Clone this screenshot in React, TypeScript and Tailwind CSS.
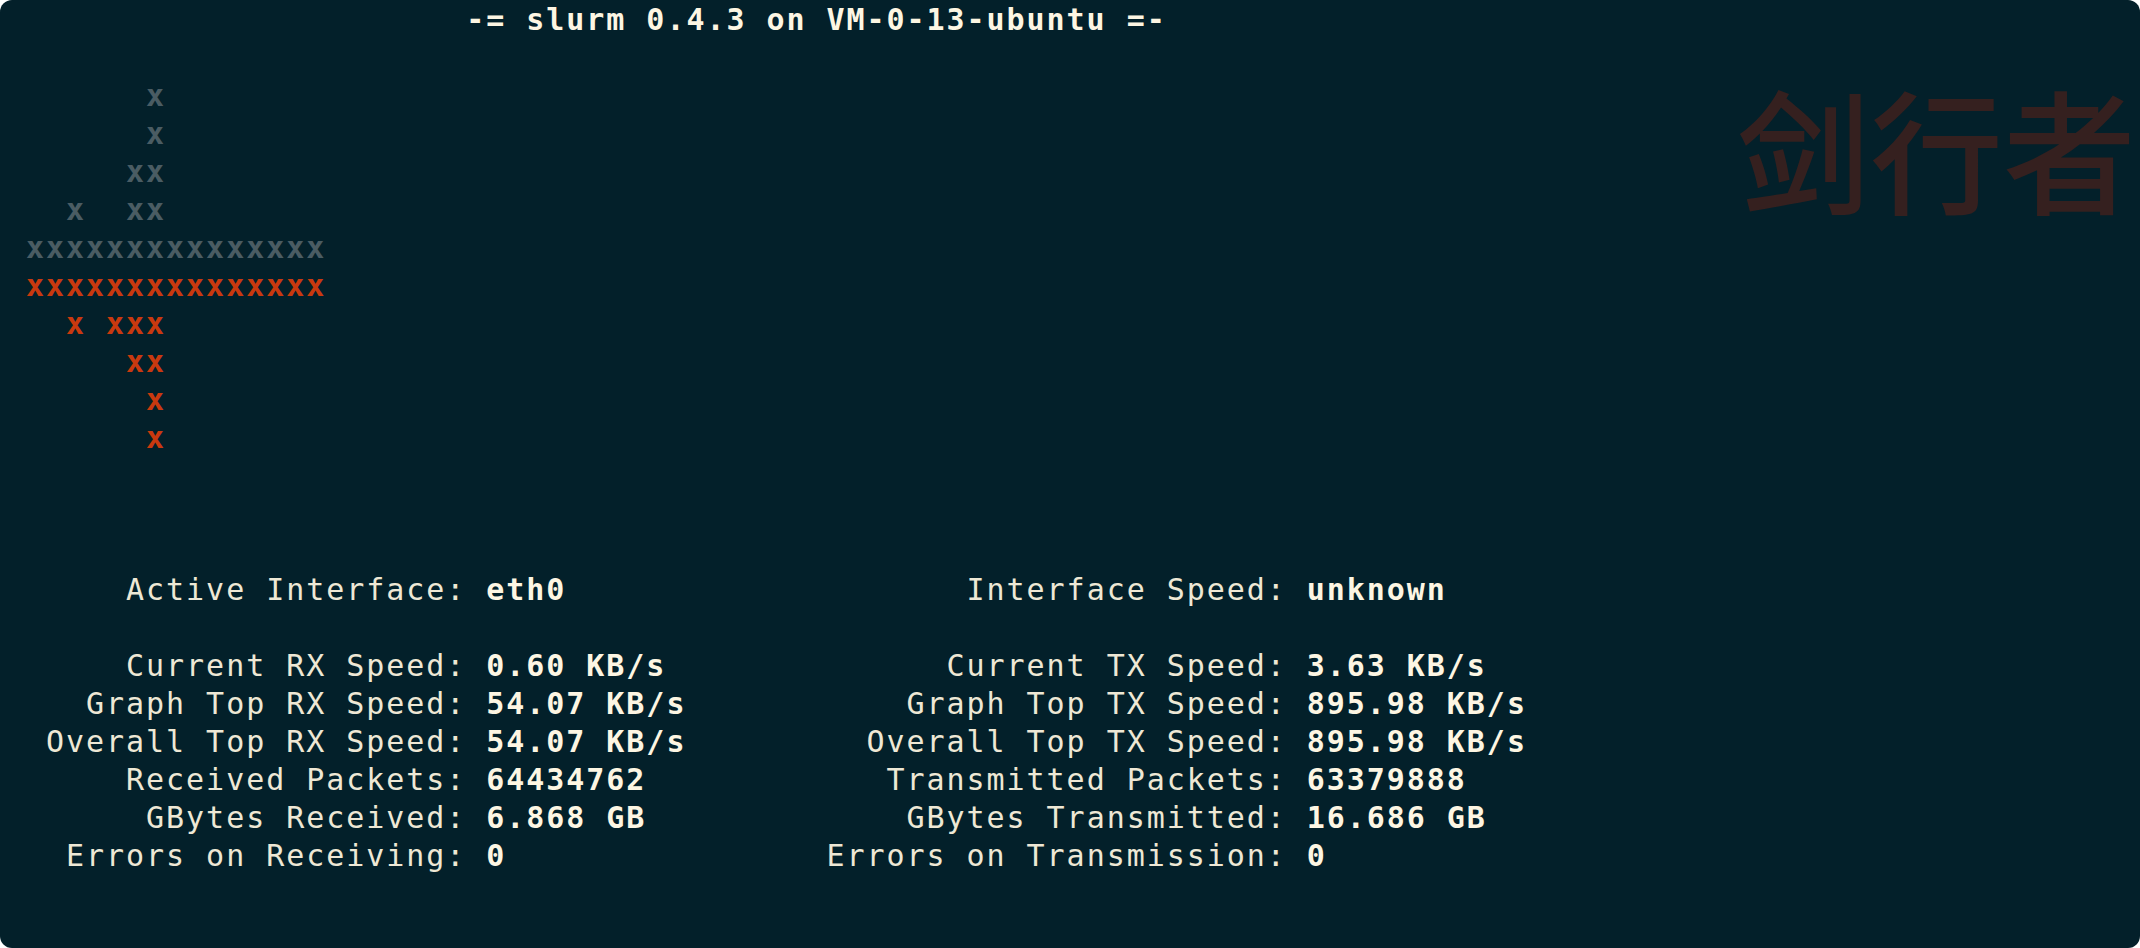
const GRAPH: { text: string; color: string }[] = [
  { text: '       x', color: 'text-[#4a5c63]' },
  { text: '       x', color: 'text-[#4a5c63]' },
  { text: '      xx', color: 'text-[#4a5c63]' },
  { text: '   x  xx', color: 'text-[#4a5c63]' },
  { text: ' xxxxxxxxxxxxxxx', color: 'text-[#4a5c63]' },
  { text: ' xxxxxxxxxxxxxxx', color: 'text-[#c9390f]' },
  { text: '   x xxx', color: 'text-[#c9390f]' },
  { text: '      xx', color: 'text-[#c9390f]' },
  { text: '       x', color: 'text-[#c9390f]' },
  { text: '       x', color: 'text-[#c9390f]' },
];

const STATS: [string, string, string, string][] = [
  ['Current RX Speed', '0.60 KB/s', 'Current TX Speed', '3.63 KB/s'],
  ['Graph Top RX Speed', '54.07 KB/s', 'Graph Top TX Speed', '895.98 KB/s'],
  ['Overall Top RX Speed', '54.07 KB/s', 'Overall Top TX Speed', '895.98 KB/s'],
  ['Received Packets', '64434762', 'Transmitted Packets', '63379888'],
  ['GBytes Received', '6.868 GB', 'GBytes Transmitted', '16.686 GB'],
  ['Errors on Receiving', '0', 'Errors on Transmission', '0'],
];

function StatRow({ row }: { row: [string, string, string, string] }) {
  const [leftLabel, leftValue, rightLabel, rightValue] = row;
  return (
    <div className="h-[38px]">
      <span>{`${leftLabel}: `.padStart(24)}</span>
      <b className="font-bold text-[#fdf6e3]">{leftValue.padEnd(17)}</b>
      <span>{`${rightLabel}: `.padStart(24)}</span>
      <b className="font-bold text-[#fdf6e3]">{rightValue}</b>
    </div>
  );
}

export default function App() {
  return (
    <div className="relative h-[948px] w-[2140px] overflow-hidden rounded-[12px] bg-[#03202a] pt-px pl-[6px] font-['DejaVu_Sans_Mono',monospace] text-[30px] leading-[38px] tracking-[1.95px] whitespace-pre text-[#eee8d5]">
      <div className="h-[38px] font-bold text-[#fdf6e3]">{'                       -= slurm 0.4.3 on VM-0-13-ubuntu =-'}</div>
      <div className="h-[38px]" />
      {GRAPH.map((line, i) => (
        <div key={i} className={`h-[38px] font-bold ${line.color}`}>
          {line.text}
        </div>
      ))}
      <div className="h-[114px]" />
      <StatRow row={['Active Interface', 'eth0', 'Interface Speed', 'unknown']} />
      <div className="h-[38px]" />
      {STATS.map((row) => (
        <StatRow key={row[0]} row={row} />
      ))}
      <div className="absolute top-[71px] right-[4px] font-['Noto_Sans_CJK_SC',sans-serif] text-[133px] leading-[150px] font-medium tracking-normal text-[#35201f]">
        剑行者
      </div>
    </div>
  );
}
